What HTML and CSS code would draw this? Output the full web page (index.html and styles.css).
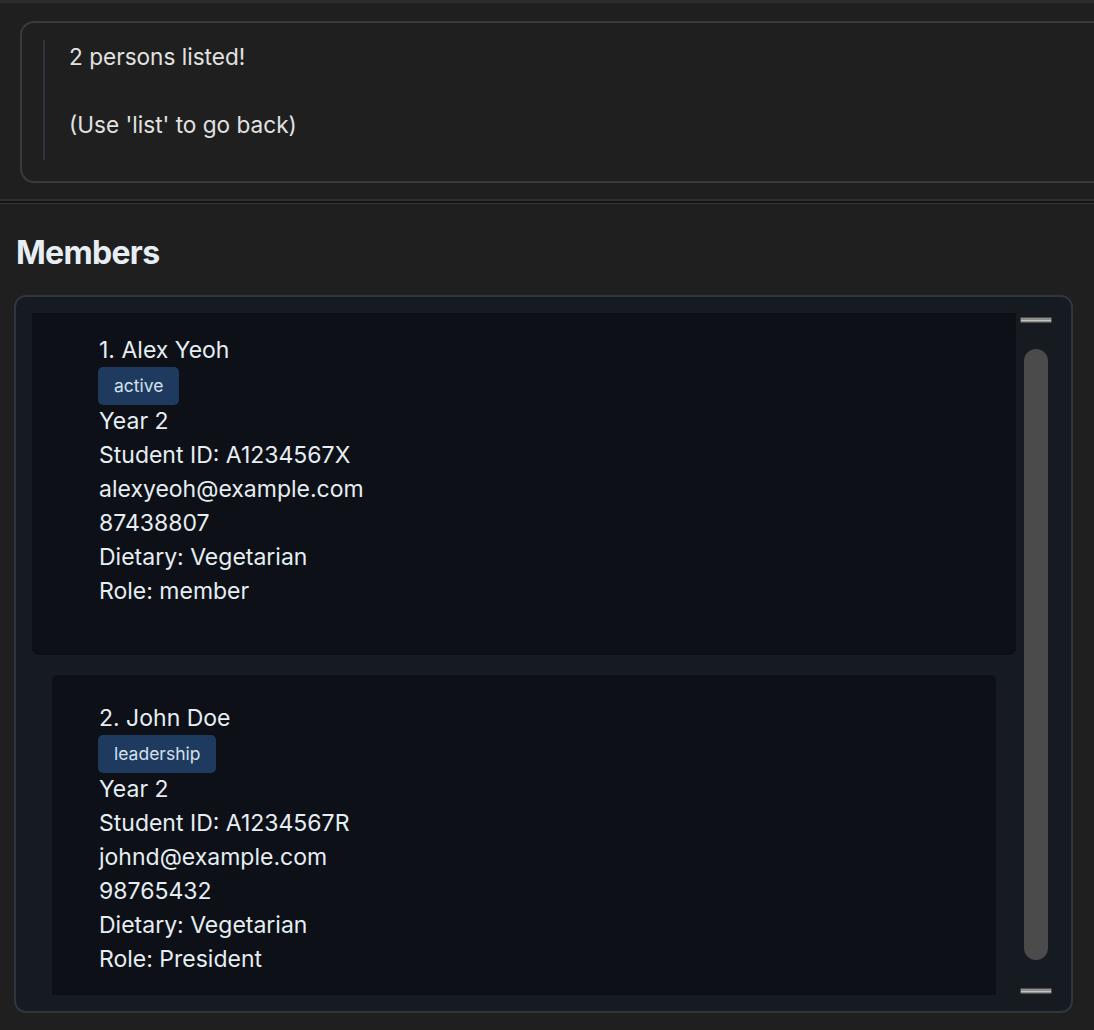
FILE: index.html
```html
<!DOCTYPE html>
<html lang="en">
<head>
<meta charset="utf-8">
<title>Members</title>
<link rel="stylesheet" href="styles.css">
</head>
<body>
<div class="topbar"></div>
<section class="result">
  <div class="result-box">
    <div class="result-text">
      <p>2 persons listed!</p>
      <p>&nbsp;</p>
      <p>(Use 'list' to go back)</p>
    </div>
  </div>
</section>
<div class="divider"></div>
<section class="members">
  <h1 class="members-title">Members</h1>
  <div class="panel">
    <div class="list">
      <div class="card card-selected">
        <div class="line">1. Alex Yeoh</div>
        <div class="tags"><span class="tag">active</span></div>
        <div class="line">Year 2</div>
        <div class="line">Student ID: A1234567X</div>
        <div class="line">alexyeoh@example.com</div>
        <div class="line">87438807</div>
        <div class="line">Dietary: Vegetarian</div>
        <div class="line">Role: member</div>
      </div>
      <div class="card">
        <div class="line">2. John Doe</div>
        <div class="tags"><span class="tag">leadership</span></div>
        <div class="line">Year 2</div>
        <div class="line">Student ID: A1234567R</div>
        <div class="line">johnd@example.com</div>
        <div class="line">98765432</div>
        <div class="line">Dietary: Vegetarian</div>
        <div class="line">Role: President</div>
      </div>
    </div>
    <div class="scrollbar">
      <span class="sb-arrow sb-top"></span>
      <span class="sb-thumb"></span>
      <span class="sb-arrow sb-bottom"></span>
    </div>
  </div>
</section>
</body>
</html>
```
FILE: styles.css
```css
html, body {
  margin: 0;
  padding: 0;
}
body {
  width: 1094px;
  height: 1030px;
  overflow: hidden;
  background: #1f1f1f;
  font-family: Inter, "Noto Sans", "Liberation Sans", sans-serif;
}
.topbar {
  height: 3px;
  background: #2c2c2c;
}
.result {
  box-sizing: border-box;
  height: 196px;
  padding: 18px 0 0 20px;
}
.result-box {
  box-sizing: border-box;
  height: 162px;
  border: 2px solid #3a3a3a;
  border-right: none;
  border-radius: 14px 0 0 14px;
  padding: 17px 0 0 21px;
}
.result-text {
  height: 120px;
  border-left: 2px solid #2e353f;
  padding-left: 24px;
  color: #e2e2e2;
  font-size: 22.6px;
  line-height: 34px;
}
.result-text p {
  margin: 0;
}
.divider {
  height: 2px;
  background: #10131a;
  border-top: 2px solid #2e2e2e;
  border-bottom: 1px solid #353535;
}
.members {
  padding: 0 21px 0 14px;
}
.members-title {
  margin: 0;
  padding: 28px 0 21px 2px;
  font-size: 32px;
  line-height: 42px;
  font-weight: 700;
  letter-spacing: -0.7px;
  color: #e6edf3;
}
.panel {
  box-sizing: border-box;
  height: 718px;
  border: 2px solid #30363d;
  border-radius: 12px;
  background: #161b22;
  padding: 16px;
  display: flex;
}
.list {
  flex: 1;
  overflow: hidden;
  display: flex;
  flex-direction: column;
  gap: 20px;
}
.card {
  flex-shrink: 0;
  background: #0d1117;
  border-radius: 6px;
  margin: 0 20px;
  padding: 26px 47px 47px;
  color: #e6edf3;
  font-size: 23px;
  line-height: 34px;
}
.card-selected {
  margin: 0;
  padding: 20px 67px 47px;
  border-radius: 0 0 6px 6px;
}
.tags {
  display: flex;
  height: 37px;
}
.tag {
  margin-left: -1px;
  height: 38px;
  padding: 0 16px;
  border-radius: 5px;
  background: #1e3a5f;
  color: #d4e0ee;
  font-size: 17.5px;
  line-height: 38px;
}
.scrollbar {
  width: 39px;
  display: flex;
  flex-direction: column;
  align-items: center;
}
.sb-arrow {
  box-sizing: border-box;
  width: 32px;
  height: 6px;
  border: 1px solid #4e4e4e;
  border-radius: 1px;
  background: linear-gradient(#8e8e8e 0 40%, #c4c4c4 40% 70%, #8e8e8e 70%);
  margin-left: 1px;
}
.sb-top {
  margin-top: 4px;
}
.sb-bottom {
  margin-bottom: 1px;
}
.sb-thumb {
  flex: 1;
  width: 24px;
  margin: 26px 0 28px 1px;
  border-radius: 12px;
  background: #4b4b4b;
}
```
